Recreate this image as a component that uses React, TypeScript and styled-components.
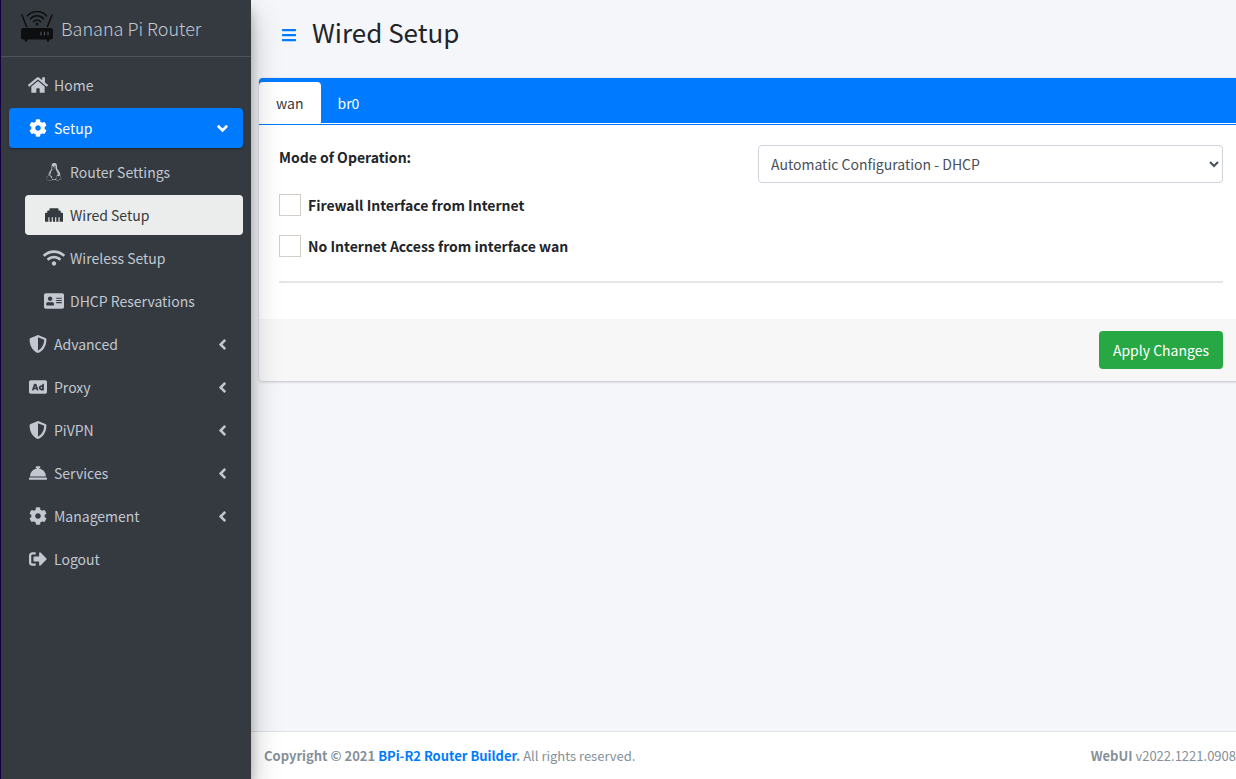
import React, { useState } from "react";
import styled, { createGlobalStyle, css } from "styled-components";
import {
  FaHome, FaCog, FaLinux, FaEthernet, FaWifi, FaAddressCard, FaShieldAlt, FaAd,
  FaConciergeBell, FaSignOutAlt, FaAngleLeft, FaAngleDown, FaBars,
} from "react-icons/fa";
import type { IconType } from "react-icons";

const GlobalStyle = createGlobalStyle`
  *, *::before, *::after { box-sizing: border-box; }
  body {
    margin: 0;
    background: #f4f6f9;
    color: #212529;
    font-family: "Source Sans Pro", "Noto Sans CJK SC", "Noto Sans", sans-serif;
    font-size: 14px;
    line-height: 24px;
    overflow-x: hidden;
  }
  a { color: #007bff; text-decoration: none; }
  button, select, input { font: inherit; }
`;

const Page = styled.div`
  display: flex;
  min-height: 100vh;
`;

const Sidebar = styled.aside`
  flex: 0 0 251px;
  z-index: 1;
  background: #343a40;
  border-left: 1px solid #14003c;
  box-shadow: 0 14px 28px rgba(0, 0, 0, 0.25), 0 10px 10px rgba(0, 0, 0, 0.22);
`;

const Brand = styled.a`
  display: flex;
  align-items: center;
  gap: 7px;
  height: 57px;
  padding: 0 19px;
  border-bottom: 1px solid #4b545c;
  color: #c2c7d0;
  font-size: 18px;
  font-weight: 300;
`;

const Menu = styled.ul`
  display: flex;
  flex-direction: column;
  gap: 3px;
  list-style: none;
  margin: 0;
  padding: 8px;
`;

const SubMenu = styled.ul`
  display: flex;
  flex-direction: column;
  gap: 3px;
  list-style: none;
  margin: 4px 0 0;
  padding: 0 0 0 16px;
`;

const tones = {
  plain: css`color: #c2c7d0;`,
  open: css`
    color: #fff;
    background: #007bff;
    box-shadow: 0 1px 3px rgba(0, 0, 0, 0.12), 0 1px 2px rgba(0, 0, 0, 0.24);
  `,
  current: css`color: #343a40; background: #ebecec;`,
};

const NavLink = styled.a<{ $tone: keyof typeof tones }>`
  display: flex;
  align-items: center;
  height: 40px;
  padding: 0 12px 0 16px;
  border-radius: 4px;
  ${(p) => tones[p.$tone]}
`;

const NavIcon = styled.span<{ $width: number }>`
  display: flex;
  justify-content: center;
  width: 26px;
  margin-right: 3px;

  svg {
    flex: none;
    width: ${(p) => p.$width}px;
    height: 18px;
  }
`;

const NavText = styled.span`
  flex: 1;
`;

const Main = styled.div`
  flex: 1;
  min-width: 0;
  display: flex;
  flex-direction: column;
`;

const Header = styled.header`
  display: flex;
  align-items: flex-start;
  gap: 15px;
  height: 70px;
  padding: 16px 30px;
`;

const Toggle = styled.button`
  display: flex;
  align-items: center;
  height: 38px;
  padding: 0;
  border: 0;
  background: none;
  color: #007bff;
  font-size: 16px;
`;

const Title = styled.h1`
  margin: 0;
  font-size: 26px;
  font-weight: 400;
  line-height: 32px;
`;

const Card = styled.form`
  margin: 8px -8px 0 8px;
  border-radius: 4px;
  background: #fff;
  box-shadow: 0 0 1px rgba(0, 0, 0, 0.13), 0 1px 3px rgba(0, 0, 0, 0.2);
`;

const Tabs = styled.div`
  display: flex;
  height: 47px;
  padding-top: 4px;
  border-radius: 4px 4px 0 0;
  background: #007bff;
  box-shadow: inset 0 -1px #007bff, inset 0 -2px #fff;
`;

const Tab = styled.button<{ $active: boolean }>`
  height: 42px;
  padding: 0 17px;
  border: 0;
  border-radius: 4px 4px 0 0;
  background: ${(p) => (p.$active ? "#fff" : "transparent")};
  color: ${(p) => (p.$active ? "#343a40" : "#fff")};
`;

const Body = styled.div`
  padding: 20px 21px 36px 20px;
`;

const Field = styled.div`
  display: grid;
  grid-template-columns: 1fr 1fr;
  gap: 14px;
  margin-bottom: 11px;
`;

const Label = styled.label`
  font-weight: 700;
`;

const Select = styled.select`
  width: 100%;
  height: 38px;
  padding: 0 8px;
  border: 1px solid #ced4da;
  border-radius: 4px;
  background: #fff;
  color: #495057;
`;

const CheckRow = styled.div`
  display: flex;
  align-items: center;
  gap: 7px;
  height: 22px;
  margin-bottom: 19px;
`;

const Check = styled.input`
  appearance: none;
  width: 22px;
  height: 22px;
  margin: 0;
  border: 1px solid #d3cfc8;
  background: #fff;
  &:checked { background: #007bff; }
`;

const Rule = styled.hr`
  height: 2px;
  margin: 24px 0 0;
  border: 0;
  background: #e5e5e5;
`;

const CardFooter = styled.div`
  display: flex;
  justify-content: flex-end;
  padding: 12px 21px;
  border-radius: 0 0 4px 4px;
  background: #f7f7f7;
`;

const Apply = styled.button`
  height: 38px;
  padding: 0 14px;
  border: 0;
  border-radius: 4px;
  background: #28a745;
  color: #fff;
`;

const Footer = styled.footer`
  display: flex;
  justify-content: space-between;
  height: 48px;
  margin-top: auto;
  padding: 12px 0 12px 13px;
  border-top: 1px solid #dee2e6;
  background: #fff;
  color: #869099;
  font-size: 13px;
  white-space: nowrap;
`;

const RouterLogo = () => (
  <svg width="34" height="34" viewBox="0 0 34 34" fill="none" stroke="#0c0e10" strokeLinecap="round" aria-hidden="true">
    <rect x="1" y="17" width="32" height="11.500" rx="2.500" fill="#0c0e10" stroke="none" />
    <path d="M2 4l4.500 11.500M32 4l-4.500 11.500" strokeWidth="1.500" />
    <path d="M6 28.500v1M28 28.500v1" strokeWidth="2.600" />
    <path d="M7.500 4.800C12.500-.9 21.500-.9 26.500 4.800M10.500 7.800c3.500-4 9.500-4 13 0M13.500 10.600c2-2.200 5-2.200 7 0" strokeWidth="1.600" />
    <circle cx="17" cy="13" r="1.500" fill="#0c0e10" stroke="none" />
    <path d="M21 21v3M24.500 21v3M28 21v3" stroke="#4a5056" strokeWidth="1.200" />
  </svg>
);

type Item = { text: string; icon: IconType; iconWidth?: number; arrow?: boolean; children?: Item[] };

const items: Item[] = [
  { text: "Home", icon: FaHome, iconWidth: 20 },
  {
    text: "Setup",
    icon: FaCog,
    children: [
      { text: "Router Settings", icon: FaLinux },
      { text: "Wired Setup", icon: FaEthernet },
      { text: "Wireless Setup", icon: FaWifi, iconWidth: 22 },
      { text: "DHCP Reservations", icon: FaAddressCard, iconWidth: 20 },
    ],
  },
  { text: "Advanced", icon: FaShieldAlt, arrow: true },
  { text: "Proxy", icon: FaAd, arrow: true },
  { text: "PiVPN", icon: FaShieldAlt, arrow: true },
  { text: "Services", icon: FaConciergeBell, arrow: true },
  { text: "Management", icon: FaCog, arrow: true },
  { text: "Logout", icon: FaSignOutAlt },
];

function NavItem({ item }: { item: Item }) {
  const Icon = item.icon;
  const tone = item.children ? "open" : item.text === "Wired Setup" ? "current" : "plain";
  return (
    <li>
      <NavLink href="#" $tone={tone}>
        <NavIcon $width={item.iconWidth ?? 18}><Icon /></NavIcon>
        <NavText>{item.text}</NavText>
        {item.arrow && <FaAngleLeft size={17} />}
        {item.children && <FaAngleDown size={17} />}
      </NavLink>
      {item.children && (
        <SubMenu>
          {item.children.map((child) => <NavItem key={child.text} item={child} />)}
        </SubMenu>
      )}
    </li>
  );
}

export default function App() {
  const [tab, setTab] = useState("wan");
  return (
    <>
      <GlobalStyle />
      <Page>
        <Sidebar>
          <Brand href="#"><RouterLogo />Banana Pi Router</Brand>
          <nav>
            <Menu>{items.map((item) => <NavItem key={item.text} item={item} />)}</Menu>
          </nav>
        </Sidebar>
        <Main>
          <Header>
            <Toggle type="button" aria-label="Toggle menu"><FaBars /></Toggle>
            <Title>Wired Setup</Title>
          </Header>
          <Card onSubmit={(e) => e.preventDefault()}>
            <Tabs role="tablist">
              {["wan", "br0"].map((name) => (
                <Tab key={name} type="button" role="tab" aria-selected={tab === name} $active={tab === name} onClick={() => setTab(name)}>
                  {name}
                </Tab>
              ))}
            </Tabs>
            <Body>
              <Field>
                <Label htmlFor="mode">Mode of Operation:</Label>
                <Select id="mode" defaultValue="dhcp">
                  <option value="dhcp">Automatic Configuration - DHCP</option>
                </Select>
              </Field>
              <CheckRow>
                <Check type="checkbox" id="firewall" />
                <Label htmlFor="firewall">Firewall Interface from Internet</Label>
              </CheckRow>
              <CheckRow>
                <Check type="checkbox" id="no-internet" />
                <Label htmlFor="no-internet">No Internet Access from interface {tab}</Label>
              </CheckRow>
              <Rule />
            </Body>
            <CardFooter>
              <Apply type="submit">Apply Changes</Apply>
            </CardFooter>
          </Card>
          <Footer>
            <div><strong>Copyright © 2021 <a href="#">BPi-R2 Router Builder</a>.</strong> All rights reserved.</div>
            <div><strong>WebUI</strong> v2022.1221.0908</div>
          </Footer>
        </Main>
      </Page>
    </>
  );
}
